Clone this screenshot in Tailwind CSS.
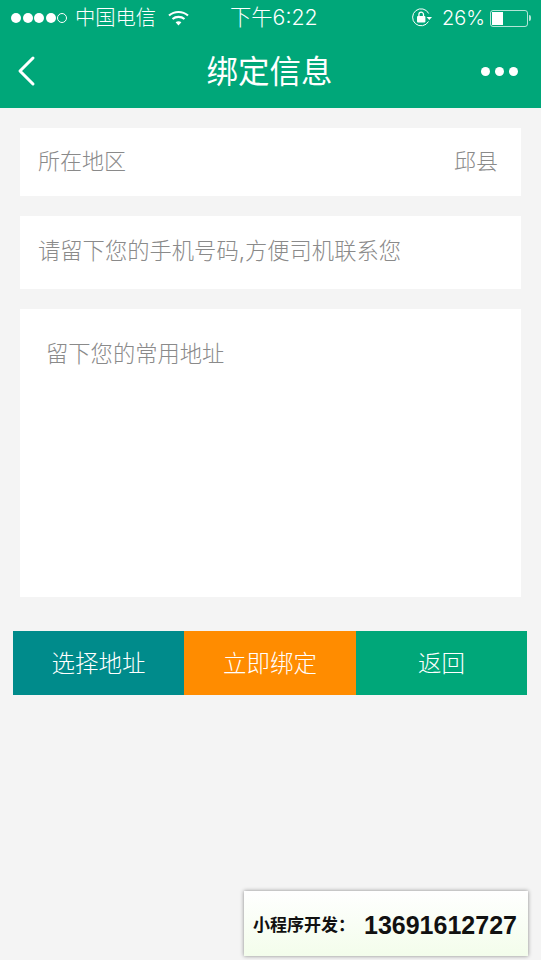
<!DOCTYPE html>
<html lang="zh-CN">
<head>
<meta charset="utf-8">
<script src="https://cdn.jsdelivr.net/npm/@tailwindcss/browser@4"></script>
</head>
<body class="bg-[#f4f4f4]">
<div class="relative w-[541px] h-[960px] overflow-hidden bg-[#f4f4f4] font-['Inter','Noto_Sans_CJK_SC',sans-serif]">
  <header class="h-[108px] bg-[#00a779] text-white">
    <div class="h-[36px] flex items-center pl-[11px] pr-[10px] text-[20.3px] leading-none">
      <div class="w-[225px] flex items-center">
        <div class="flex gap-[1.5px] items-center w-[58px]">
          <span class="w-[10px] h-[10px] rounded-full bg-white"></span>
          <span class="w-[10px] h-[10px] rounded-full bg-white"></span>
          <span class="w-[10px] h-[10px] rounded-full bg-white"></span>
          <span class="w-[10px] h-[10px] rounded-full bg-white"></span>
          <span class="w-[10px] h-[10px] rounded-full border border-white"></span>
        </div>
        <span class="ml-[6px] font-light">中国电信</span>
        <svg class="ml-[12px]" width="21" height="16" viewBox="0 0 21 16" fill="none" stroke="white" stroke-width="2.2"><path d="M1 5.5C6.5 .8 14.5 .8 20 5.5"/><path d="M4.5 9C8 6.2 13 6.2 16.5 9"/><path d="M10.5 15.5L7.6 12.3C9.3 11 11.7 11 13.4 12.3Z" fill="white" stroke="none"/></svg>
      </div>
      <span class="font-light text-[21.3px] w-[150px] -ml-[6px]">下午6:22</span>
      <div class="ml-auto flex items-center">
        <svg width="22" height="22" viewBox="0 0 22 22" fill="none" stroke="white" stroke-width="1"><path d="M17.5 14.5A8.5 8.5 0 1 1 17.7 6.5"/><rect x="6" y="9" width="8.4" height="6.4" rx="1" fill="white" stroke="none"/><path d="M7.9 9.5V7.5a2.3 2.3 0 0 1 4.6 0V9.5" stroke-width="1.3"/><path d="M15.5 10h5.5l-2.7 3z" fill="white" stroke="none"/></svg>
        <span class="ml-[9px] font-light text-[20px]">26%</span>
        <div class="ml-[5px] w-[38px] h-[17px] rounded-[3px] border border-white/70 p-[1px]"><div class="w-[11px] h-full bg-white"></div></div>
        <span class="ml-[1px] w-[2px] h-[6px] rounded-r-sm bg-white/70"></span>
      </div>
    </div>
    <div class="h-[70px] relative flex items-center justify-center">
      <svg class="absolute left-[17px] top-[19px]" width="20" height="32" viewBox="0 0 20 32" fill="none" stroke="white" stroke-width="3" stroke-linecap="round" stroke-linejoin="round"><path d="M16 3L3 16L16 29"/></svg>
      <h1 class="text-[31.5px] leading-none font-normal -ml-[2px] mt-[1px]">绑定信息</h1>
      <div class="absolute right-[23px] top-[31px] flex gap-[5px]">
        <span class="w-[9px] h-[9px] rounded-full bg-white"></span>
        <span class="w-[9px] h-[9px] rounded-full bg-white"></span>
        <span class="w-[9px] h-[9px] rounded-full bg-white"></span>
      </div>
    </div>
  </header>
  <main class="pt-[20px] px-[20px] flex flex-col gap-[20px] text-[22.3px] font-light leading-none text-[#8a8a8a]">
    <div class="h-[68px] bg-white flex items-center justify-between pl-[18px] pr-[23px] text-[22px]">
      <span class="-mt-[2px]">所在地区</span><span class="-mt-[2px]">邱县</span>
    </div>
    <div class="h-[73px] bg-white flex items-center pl-[18px]"><span class="-mt-[2px]">请留下您的手机号码,方便司机联系您</span></div>
    <div class="h-[288px] bg-white pl-[26px] pt-[34px]">留下您的常用地址</div>
  </main>
  <div class="mt-[34px] ml-[13px] w-[514px] h-[64px] flex text-white text-[23.5px] font-light leading-none">
    <div class="w-[171px] pt-[2px] bg-[#008b8b] flex items-center justify-center">选择地址</div>
    <div class="w-[172px] pt-[2px] bg-[#ff8c00] flex items-center justify-center">立即绑定</div>
    <div class="w-[171px] pt-[2px] bg-[#00a779] flex items-center justify-center">返回</div>
  </div>
  <div class="absolute left-[244px] top-[891px] w-[284px] h-[65px] bg-linear-to-b from-white to-[#f3fdeb] shadow-[0_0_4px_rgba(0,0,0,0.45)] flex items-center pl-[9px] pt-[3px] text-[#111] font-bold">
    <span class="text-[17px] leading-none">小程序开发：</span>
    <span class="text-[25px] leading-none font-['Liberation_Sans'] ml-[9px]">13691612727</span>
  </div>
</div>
</body>
</html>
